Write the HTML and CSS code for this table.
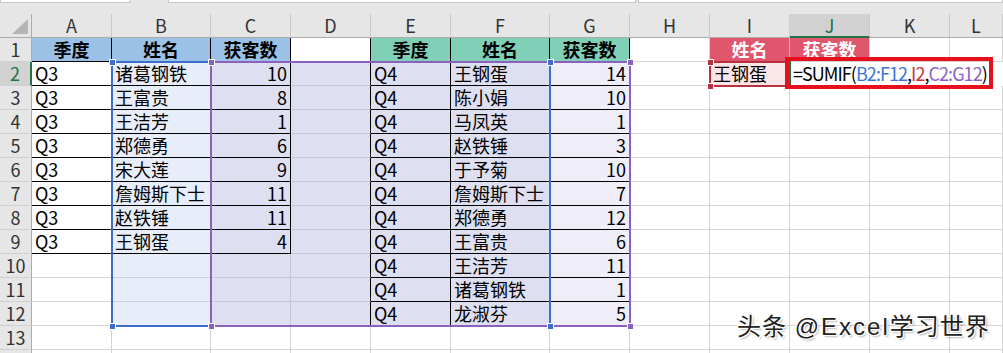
FILE: index.html
```html
<!DOCTYPE html>
<html lang="zh">
<head>
<meta charset="utf-8">
<link rel="stylesheet" href="styles.css">
</head>
<body>
<div class="app">
  <div class="strip"><div class="box b1"></div><div class="box b2"></div><div class="box b3"></div></div>
  <div class="sheet">
    <div class="corner"><svg width="16" height="15" viewBox="0 0 16 15"><polygon points="16,0 16,15 0,15" fill="#b5b5b5"/></svg></div>
    <div class="ch">A</div><div class="ch">B</div><div class="ch">C</div><div class="ch">D</div><div class="ch">E</div><div class="ch">F</div><div class="ch">G</div><div class="ch">H</div><div class="ch">I</div><div class="ch sel">J</div><div class="ch">K</div><div class="ch">L</div>

    <div class="rh">1</div>
    <div class="c hb t">季度</div><div class="c hb t">姓名</div><div class="c hb t">获客数</div><div class="c rb"></div>
    <div class="c hg t">季度</div><div class="c hg t">姓名</div><div class="c hg t">获客数</div><div class="c"></div>
    <div class="c hr sepw">姓名</div><div class="c hr">获客数</div><div class="c"></div><div class="c"></div>

    <div class="rh sel">2</div>
    <div class="c t">Q3</div><div class="c tb t">诸葛钢铁</div><div class="c tl t n">10</div><div class="c tl rb"></div>
    <div class="c tl t">Q4</div><div class="c tl t">王钢蛋</div><div class="c tp t n">14</div><div class="c"></div>
    <div class="c ipk">王钢蛋</div><div class="c fx">=SUMIF(<span class="r1">B2:F12</span>,<span class="r2">I2</span>,<span class="r3">C2:G12</span>)</div>

    <div class="rh">3</div>
    <div class="c t">Q3</div><div class="c tb t">王富贵</div><div class="c tl t n">8</div><div class="c tl rb"></div>
    <div class="c tl t">Q4</div><div class="c tl t">陈小娟</div><div class="c tp t n">10</div>
    <div class="c"></div><div class="c"></div><div class="c"></div><div class="c"></div><div class="c"></div>

    <div class="rh">4</div>
    <div class="c t">Q3</div><div class="c tb t">王洁芳</div><div class="c tl t n">1</div><div class="c tl rb"></div>
    <div class="c tl t">Q4</div><div class="c tl t">马凤英</div><div class="c tp t n">1</div>
    <div class="c"></div><div class="c"></div><div class="c"></div><div class="c"></div><div class="c"></div>

    <div class="rh">5</div>
    <div class="c t">Q3</div><div class="c tb t">郑德勇</div><div class="c tl t n">6</div><div class="c tl rb"></div>
    <div class="c tl t">Q4</div><div class="c tl t">赵铁锤</div><div class="c tp t n">3</div>
    <div class="c"></div><div class="c"></div><div class="c"></div><div class="c"></div><div class="c"></div>

    <div class="rh">6</div>
    <div class="c t">Q3</div><div class="c tb t">宋大莲</div><div class="c tl t n">9</div><div class="c tl rb"></div>
    <div class="c tl t">Q4</div><div class="c tl t">于予菊</div><div class="c tp t n">10</div>
    <div class="c"></div><div class="c"></div><div class="c"></div><div class="c"></div><div class="c"></div>

    <div class="rh">7</div>
    <div class="c t">Q3</div><div class="c tb t">詹姆斯下士</div><div class="c tl t n">11</div><div class="c tl rb"></div>
    <div class="c tl t">Q4</div><div class="c tl t">詹姆斯下士</div><div class="c tp t n">7</div>
    <div class="c"></div><div class="c"></div><div class="c"></div><div class="c"></div><div class="c"></div>

    <div class="rh">8</div>
    <div class="c t">Q3</div><div class="c tb t">赵铁锤</div><div class="c tl t n">11</div><div class="c tl rb"></div>
    <div class="c tl t">Q4</div><div class="c tl t">郑德勇</div><div class="c tp t n">12</div>
    <div class="c"></div><div class="c"></div><div class="c"></div><div class="c"></div><div class="c"></div>

    <div class="rh">9</div>
    <div class="c t">Q3</div><div class="c tb t">王钢蛋</div><div class="c tl t n">4</div><div class="c tl rb"></div>
    <div class="c tl t">Q4</div><div class="c tl t">王富贵</div><div class="c tp t n">6</div>
    <div class="c"></div><div class="c"></div><div class="c"></div><div class="c"></div><div class="c"></div>

    <div class="rh">10</div>
    <div class="c"></div><div class="c tb"></div><div class="c tl"></div><div class="c tl rb"></div>
    <div class="c tl t">Q4</div><div class="c tl t">王洁芳</div><div class="c tp t n">11</div>
    <div class="c"></div><div class="c"></div><div class="c"></div><div class="c"></div><div class="c"></div>

    <div class="rh">11</div>
    <div class="c"></div><div class="c tb"></div><div class="c tl"></div><div class="c tl rb"></div>
    <div class="c tl t">Q4</div><div class="c tl t">诸葛钢铁</div><div class="c tp t n">1</div>
    <div class="c"></div><div class="c"></div><div class="c"></div><div class="c"></div><div class="c"></div>

    <div class="rh">12</div>
    <div class="c"></div><div class="c tb"></div><div class="c tl"></div><div class="c tl rb"></div>
    <div class="c tl t">Q4</div><div class="c tl t">龙淑芬</div><div class="c tp t n">5</div>
    <div class="c"></div><div class="c"></div><div class="c"></div><div class="c"></div><div class="c"></div>

    <div class="rh">13</div>
    <div class="c"></div><div class="c"></div><div class="c"></div><div class="c"></div><div class="c"></div><div class="c"></div><div class="c"></div><div class="c"></div><div class="c"></div><div class="c"></div><div class="c"></div><div class="c"></div>

    <div class="rh"></div>
    <div class="c"></div><div class="c"></div><div class="c"></div><div class="c"></div><div class="c"></div><div class="c"></div><div class="c"></div><div class="c"></div><div class="c"></div><div class="c"></div><div class="c"></div><div class="c"></div>
  </div>

  <div class="rng blue"></div>
  <div class="rng purple"></div>
  <div class="rng iref"></div>
  <div class="active"></div>
  <div class="annot"></div>

  <div class="hd hb1"></div><div class="hd hb2"></div><div class="hd hb3"></div><div class="hd hb4"></div>
  <div class="hd hp1"></div><div class="hd hp2"></div><div class="hd hp3"></div><div class="hd hp4"></div>
  <div class="hd hr1"></div><div class="hd hr2"></div>

  <div class="wm">头条 <span class="lat">@Excel</span>学习世界</div>
</div>
</body>
</html>
```

FILE: styles.css
```css
* { box-sizing: border-box; margin: 0; padding: 0; }
html, body { width: 1003px; height: 353px; overflow: hidden; background: #fff; }
body {
  font-family: "Noto Sans CJK SC", "Noto Sans", sans-serif;
  font-size: 18px;
  color: #000;
}
.app { position: relative; width: 1003px; height: 353px; overflow: hidden; }

/* top strip (formula bar remnant) */
.strip { height: 14px; background: #e6e6e6; display: flex; align-items: flex-start; }
.box { height: 3px; background: #fff; border: 1px solid #c6c6c6; border-top: 0; }
.b1 { width: 131px; margin-right: 37px; }
.b2 { width: 468px; margin-right: 2px; }
.b3 { flex: 1; }

/* grid */
.sheet {
  display: grid;
  grid-template-columns: 32px 80px 99px 80px 80px 80px 99px 80px 80px 80px 80px 80px 1fr;
  grid-auto-rows: 24px;
}
.corner {
  background: #e6e6e6;
  border-right: 1px solid #ababab;
  border-bottom: 1px solid #ababab;
  display: flex; justify-content: flex-end; align-items: flex-end;
  padding: 0 3px 3px 0;
}
.corner svg { display: block; }
.ch {
  background: #e6e6e6;
  border-right: 1px solid #cbcbcb;
  border-bottom: 1px solid #ababab;
  text-align: center;
  line-height: 23px;
  color: #333;
}
.ch.sel { background: #d2d2d2; color: #217346; border-bottom: 2px solid #217346; }
.rh {
  background: #e6e6e6;
  border-right: 1px solid #ababab;
  border-bottom: 1px solid #d0d0d0;
  text-align: center;
  line-height: 23px;
  color: #333;
}
.rh.sel { background: #d2d2d2; color: #217346; border-right: 2px solid #217346; }

.c {
  border-right: 1px solid #d4d4d4;
  border-bottom: 1px solid #d4d4d4;
  padding: 0 3px;
  line-height: 23px;
  white-space: nowrap;
}
.n { text-align: right; }

.tb { background: #e7eef9; border-color: #cad0dd; }
.tl { background: #dedff1; border-color: #c4c5d9; }
.tp { background: #efedf8; border-color: #d2d0e2; }

.hb { background: #9bc2e6; font-weight: 700; text-align: center; }
.hg { background: #80d0b8; font-weight: 700; text-align: center; }
.hr { background: #e0566c; color: #fff; font-weight: 700; text-align: center; }
.sepw { border-right-color: #f0aab5; }

.t { border-right-color: #000; border-bottom-color: #000; }
.rb { border-right-color: #000; }

.ipk { background: #fae5e9; }
.fx {
  grid-column: span 3;
  background: #fff;
  border-right: 0;
  border-bottom-color: #fff;
  letter-spacing: -0.95px;
}
.r1 { color: #3e74d2; }
.r2 { color: #cc3340; }
.r3 { color: #8d63c2; }

/* overlays: range reference borders */
.rng { position: absolute; }
.blue { left: 111px; top: 61px; width: 440px; height: 266px; border: 2px solid #3d6ec9; }
.purple { left: 210px; top: 61px; width: 421px; height: 266px; border: 2px solid #8a62bd; }
.iref { left: 709px; top: 61px; width: 82px; height: 26px; border: 2px solid #b7313f; }
.active { position: absolute; left: 789px; top: 61px; width: 2px; height: 24px; background: #217346; }
.annot { position: absolute; left: 785px; top: 57px; width: 208px; height: 32px; border: 4px solid #e8101c; }

.hd { position: absolute; width: 7px; height: 7px; border: 1px solid #fff; }
.hb1, .hb2, .hb3, .hb4 { background: #3d6ec9; }
.hp1, .hp2, .hp3, .hp4 { background: #8a62bd; }
.hr1, .hr2 { background: #b7313f; }
.hb1 { left: 109px; top: 59px; }
.hb2 { left: 547px; top: 59px; }
.hb3 { left: 109px; top: 323px; }
.hb4 { left: 547px; top: 323px; }
.hp1 { left: 208px; top: 59px; }
.hp2 { left: 627px; top: 59px; }
.hp3 { left: 208px; top: 323px; }
.hp4 { left: 627px; top: 323px; }
.hr1 { left: 707px; top: 59px; }
.hr2 { left: 707px; top: 83px; }

/* watermark */
.wm {
  position: absolute;
  left: 737px; top: 315px;
  font-family: "Liberation Sans", "Noto Sans CJK SC", sans-serif;
  font-size: 24px;
  line-height: 24px;
  letter-spacing: 1px;
  color: #222;
  white-space: nowrap;
  text-shadow: 1px 1px 0 #fff, -1px -1px 0 #fff, 1px -1px 0 #fff, -1px 1px 0 #fff, 2px 2px 2px rgba(0,0,0,.3);
}
.lat { letter-spacing: 2px; }
```
